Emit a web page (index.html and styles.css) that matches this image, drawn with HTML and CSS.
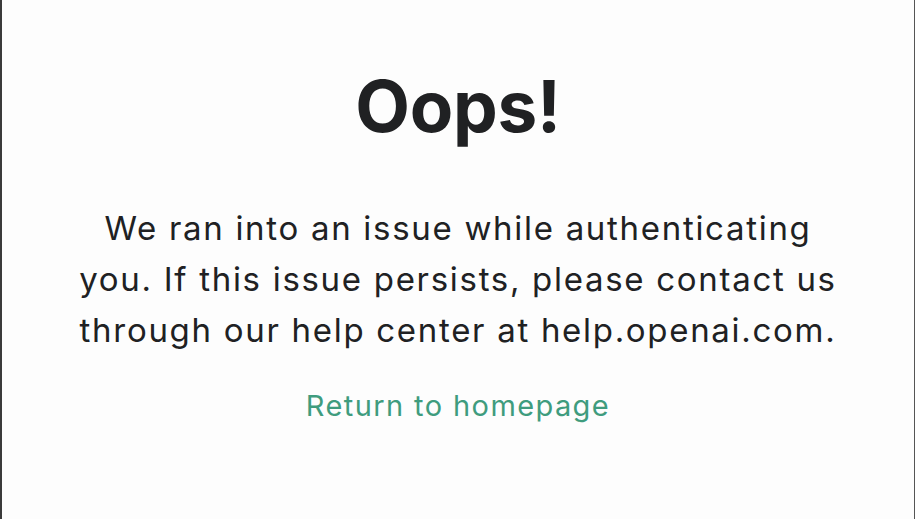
FILE: index.html
```html
<!DOCTYPE html>
<html lang="en">
<head>
<meta charset="utf-8">
<link rel="stylesheet" href="styles.css">
<title>Oops!</title>
</head>
<body>
<main class="frame">
  <section class="card">
    <h1 class="title">Oops!</h1>
    <p class="message">We ran into an issue while authenticating<br>you. If this issue persists, please contact us<br>through our help center at help.openai.com.</p>
    <a class="home-link" href="#">Return to homepage</a>
  </section>
</main>
</body>
</html>
```
FILE: styles.css
```css
html, body {
  margin: 0;
  padding: 0;
  height: 100%;
}
body {
  background: #fdfdfd;
  font-family: Inter, "Liberation Sans", sans-serif;
  color: #202123;
}
.frame {
  box-sizing: border-box;
  height: 100%;
  border-left: 2px solid #3a3a3a;
  border-right: 1px solid #555;
  display: flex;
  justify-content: center;
}
.card {
  display: flex;
  flex-direction: column;
  align-items: center;
  text-align: center;
  width: 820px;
  padding-top: 63px;
}
.title {
  margin: 0;
  font-size: 71px;
  font-weight: 700;
  line-height: 86px;
  letter-spacing: -0.3px;
}
.message {
  margin: 54px 0 0;
  font-size: 33px;
  line-height: 51px;
  font-weight: 400;
  letter-spacing: 1.7px;
}
.home-link {
  margin-top: 30px;
  font-size: 29px;
  line-height: 40px;
  letter-spacing: 1.4px;
  color: #3f9c7e;
  text-decoration: none;
}
```
